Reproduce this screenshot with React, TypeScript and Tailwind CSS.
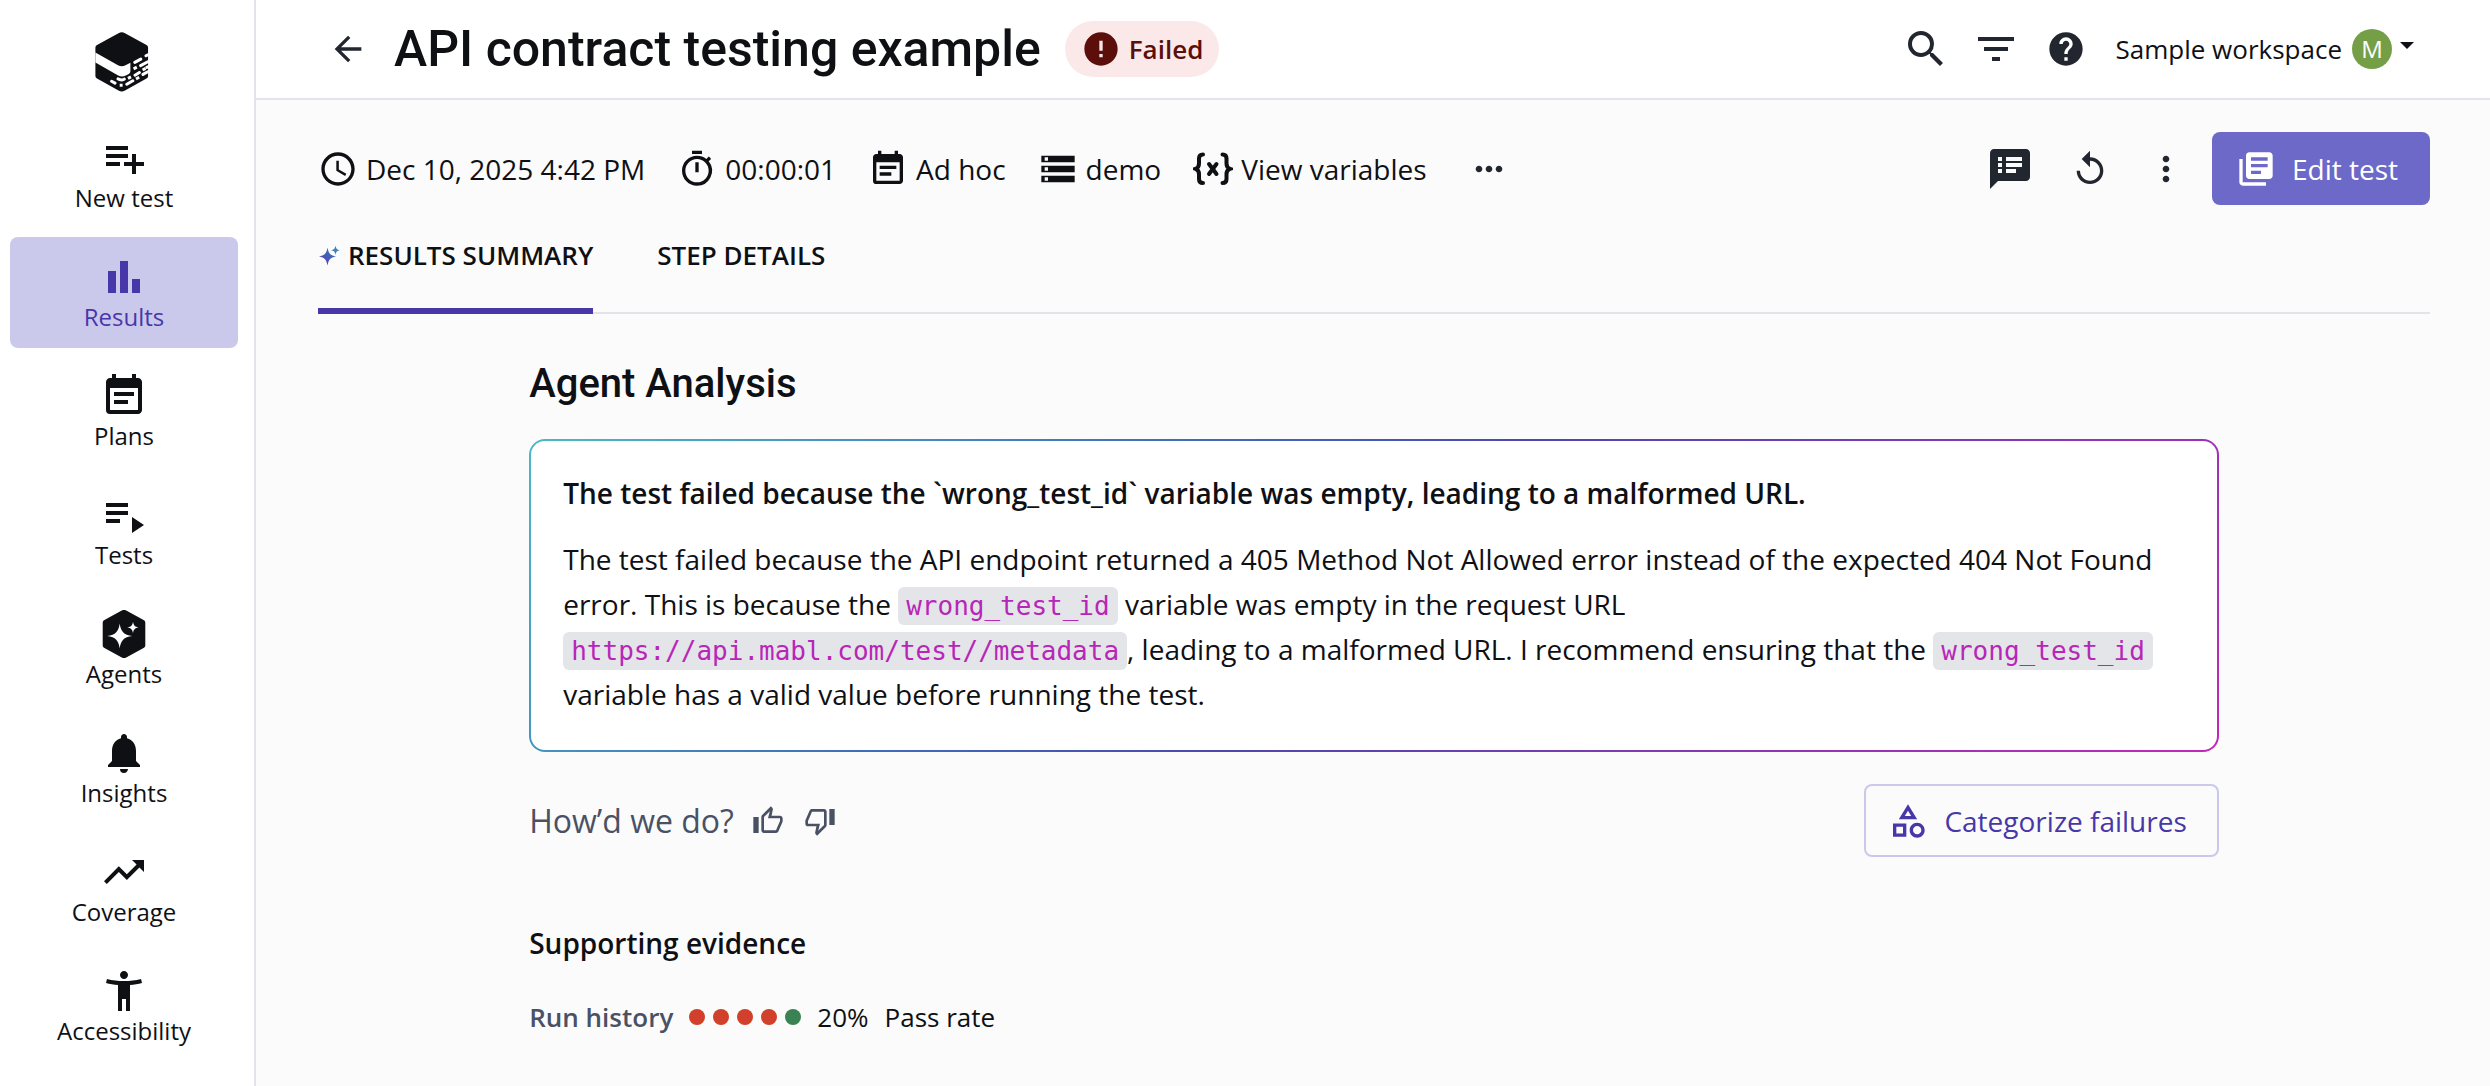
import type { ReactNode } from "react";
import type { IconType } from "react-icons";
import {
  MdAccessibilityNew,
  MdAccessTime,
  MdArrowBack,
  MdBarChart,
  MdError,
  MdEventNote,
  MdFilterList,
  MdHelp,
  MdLibraryBooks,
  MdMoreHoriz,
  MdMoreVert,
  MdNotifications,
  MdOutlineCategory,
  MdOutlineThumbDownOffAlt,
  MdOutlineThumbUpOffAlt,
  MdOutlineTimer,
  MdPlaylistAdd,
  MdPlaylistPlay,
  MdReplay,
  MdSearch,
  MdSpeakerNotes,
  MdStorage,
  MdTrendingUp,
} from "react-icons/md";

function Logo() {
  return (
    <svg viewBox="0 0 54 60" className="h-[60px] w-[54px]" aria-label="mabl">
      <path
        d="M23.5 1.2a6.5 6.5 0 0 1 6.5 0L51.5 13a3 3 0 0 1 1.6 2.6V44a3 3 0 0 1-1.6 2.6L30 58.6a6.5 6.5 0 0 1-6.5 0L2 46.6A3 3 0 0 1 .4 44V15.600A3 3 0 0 1 2 13z"
        fill="#0f1014"
      />
      <path
        d="M.4 20.600 23 33.200c2.600 1.300 5 1.300 7.500 0l4.900-2.400V39c0 1.600-.6 2.400-2 3.200l-2.600 1.300c-2.600 1.300-5 1.300-7.600 0L.4 30.600z"
        fill="#fff"
      />
      <g stroke="#fff" strokeWidth="3" strokeLinecap="round" fill="none">
        <path d="M39.800 30.400l6-3.300M51 23.800l2-1.100M45.600 33.600l7.200-3.900M40 43.200l4.400-2.700M48 42.400l4.800-2.700M31.800 52.200l6-3.400M23 46.800q4.300 2 6.300.4M16.600 49.200l3.400 1.900M51.800 35.400l1-.5" />
        <path strokeLinecap="butt" d="M38.600 36.800l3.200-1.600M47.600 38l3-1.600M33 46.300l3-1.500M41 47l3.200-1.700M24.700 53.300h2.900" />
      </g>
      <path d="M53.600 0v60H58V0z" fill="#fff" />
    </svg>
  );
}

function AgentsIcon({ className }: { className?: string }) {
  return (
    <svg viewBox="0 0 48 48" className={className} aria-hidden="true">
      <path
        d="M21.300.7a5.500 5.500 0 0 1 5.400 0l17.300 9.600a2.500 2.500 0 0 1 1.300 2.200v23a2.500 2.500 0 0 1-1.300 2.200L26.700 47.300a5.500 5.500 0 0 1-5.400 0L4 37.700a2.500 2.500 0 0 1-1.300-2.200v-23A2.500 2.500 0 0 1 4 10.300z"
        fill="currentColor"
      />
      <path d="M19.700 13.500c1 7.800 4 11.500 12.500 12.500-8.500 1-11.500 4.700-12.500 12.500-1-7.800-4-11.500-12.500-12.500 8.500-1 11.500-4.700 12.500-12.500z" fill="#fff" />
      <path d="M33 11.800c.5 3.600 2 5.200 5.700 5.700-3.700.5-5.200 2.100-5.700 5.700-.5-3.600-2-5.200-5.700-5.700 3.700-.5 5.200-2.100 5.700-5.700z" fill="#fff" />
    </svg>
  );
}

function SparkleIcon() {
  return (
    <svg viewBox="0 0 22 22" className="h-[22px] w-[22px]" aria-hidden="true">
      <defs>
        <linearGradient id="sparkle" x1="1" y1="0" x2="0" y2="1">
          <stop offset="0" stopColor="#3a9cc4" />
          <stop offset="0.5" stopColor="#3f62b8" />
          <stop offset="1" stopColor="#6a30b6" />
        </linearGradient>
      </defs>
      <path
        d="M9.500 3.500c1.200 6.200 2.700 7.700 8.500 9-5.800 1.300-7.300 2.800-8.500 9-1.200-6.200-2.700-7.700-8.500-9 5.800-1.300 7.300-2.800 8.500-9zM17.500 1.500c.7 3.400 1.400 4.100 4.500 4.700-3.100.6-3.800 1.300-4.500 4.700-.7-3.400-1.400-4.100-4.500-4.700 3.100-.6 3.800-1.300 4.500-4.700z"
        fill="url(#sparkle)"
      />
    </svg>
  );
}

function VariablesIcon({ className }: { className?: string }) {
  return (
    <svg viewBox="0 0 40 40" className={className} aria-hidden="true" fill="none" stroke="currentColor" strokeWidth="4" strokeLinecap="round">
      <path d="M10 5.500c-3 0-4 1.300-4 4v5c0 3-1 4.500-3.500 5.300 2.500.8 3.500 2.300 3.500 5.300v5c0 2.700 1 4 4 4" />
      <path d="M29.500 5.500c3 0 4 1.300 4 4v5c0 3 1 4.500 3.500 5.300-2.500.8-3.500 2.300-3.500 5.300v5c0 2.700-1 4-4 4" />
      <path d="M16 15l7.500 10M23.500 15 16 25" />
    </svg>
  );
}

type NavItem = { label: string; icon: IconType | typeof AgentsIcon };

const NAV: NavItem[] = [
  { label: "New test", icon: MdPlaylistAdd },
  { label: "Results", icon: MdBarChart },
  { label: "Plans", icon: MdEventNote },
  { label: "Tests", icon: MdPlaylistPlay },
  { label: "Agents", icon: AgentsIcon },
  { label: "Insights", icon: MdNotifications },
  { label: "Coverage", icon: MdTrendingUp },
  { label: "Accessibility", icon: MdAccessibilityNew },
];

function Sidebar({ active }: { active: string }) {
  return (
    <aside className="flex w-64 shrink-0 flex-col border-r-2 border-[#e4e3e9] bg-white pl-2.5 pr-4">
      <a href="#home" className="flex h-[118px] justify-center pr-1 pt-8">
        <Logo />
      </a>
      <nav className="flex flex-col gap-2">
        {NAV.map(({ label, icon: Glyph }) => (
          <a
            key={label}
            href={`#${label.toLowerCase().replace(" ", "-")}`}
            className={
              label === active
                ? "flex h-[111px] flex-col items-center rounded-lg bg-[#cbc9eb] pt-4 text-[#4737a9]"
                : "flex h-[111px] flex-col items-center rounded-lg pt-4"
            }
          >
            <Glyph className="size-12" />
            <span className="text-2xl leading-8">{label}</span>
          </a>
        ))}
      </nav>
    </aside>
  );
}

function Header() {
  return (
    <header className="flex h-[100px] items-center border-b-2 border-[#e4e3e9] bg-white pl-[72px] pr-[76px]">
      <button aria-label="Back" className="text-[#22262f]">
        <MdArrowBack className="size-10" />
      </button>
      <h1 className="ml-[26px] whitespace-nowrap font-['Roboto',sans-serif] text-[50px] font-medium leading-[60px]">
        API contract testing example
      </h1>
      <span className="ml-6 flex h-14 items-center gap-2 rounded-full bg-[#fbe9ea] px-4 text-[26px] font-semibold text-[#5c0f0a]">
        <MdError className="size-10" />
        Failed
      </span>
      <div className="ml-auto flex items-center text-[#22262f]">
        <div className="flex items-center gap-[22px]">
          <button aria-label="Search">
            <MdSearch className="size-12" />
          </button>
          <button aria-label="Filter">
            <MdFilterList className="size-12" />
          </button>
          <button aria-label="Help" className="flex w-12 justify-center">
            <MdHelp className="size-10" />
          </button>
        </div>
        <button className="ml-[26px] flex items-center whitespace-nowrap text-[26px] text-[#0f1014]">
          Sample workspace
          <span className="ml-2.5 flex size-10 items-center justify-center rounded-full bg-[#759f47] text-2xl text-white">M</span>
          <svg viewBox="0 0 14 7" className="mb-2 ml-2 h-[7px] w-3.5" aria-hidden="true">
            <path d="M0 0h14L7 7z" fill="currentColor" />
          </svg>
        </button>
      </div>
    </header>
  );
}

function Meta({ icon, children }: { icon: ReactNode; children: ReactNode }) {
  return (
    <span className="flex items-center gap-2 whitespace-nowrap">
      {icon}
      {children}
    </span>
  );
}

function Toolbar() {
  return (
    <div className="flex h-[73px] items-center">
      <div className="flex items-center gap-8 text-[28px] leading-10">
        <Meta icon={<MdAccessTime className="size-10" />}>Dec 10, 2025 4:42 PM</Meta>
        <Meta icon={<MdOutlineTimer className="size-10" />}>00:00:01</Meta>
        <Meta icon={<MdEventNote className="size-10" />}>Ad hoc</Meta>
        <Meta icon={<MdStorage className="size-10" />}>demo</Meta>
        <button className="flex items-center gap-2 whitespace-nowrap">
          <VariablesIcon className="size-10" />
          View variables
        </button>
        <button aria-label="More details" className="ml-2.5 text-[#22262f]">
          <MdMoreHoriz className="size-10" />
        </button>
      </div>
      <div className="ml-auto flex items-center text-[#22262f]">
        <button aria-label="Notes">
          <MdSpeakerNotes className="size-12" />
        </button>
        <button aria-label="Rerun" className="ml-9">
          <MdReplay className="size-10" />
        </button>
        <button aria-label="More actions" className="ml-9">
          <MdMoreVert className="size-10" />
        </button>
        <button className="ml-[26px] flex h-[73px] items-center gap-4 whitespace-nowrap rounded-lg bg-[#6c69c9] pl-6 pr-8 text-[28px] leading-10 text-white">
          <MdLibraryBooks className="size-10" />
          Edit test
        </button>
      </div>
    </div>
  );
}

function Tabs() {
  return (
    <div role="tablist" className="flex gap-16 border-b-2 border-[#e4e3e9] pt-8 text-[26px] font-semibold leading-9">
      <button
        role="tab"
        aria-selected="true"
        className="-mb-0.5 flex items-center gap-2 border-b-6 border-[#4737a9] pb-[35px]"
      >
        <SparkleIcon />
        RESULTS SUMMARY
      </button>
      <button role="tab" aria-selected="false" className="-mb-0.5 border-b-6 border-transparent pb-[35px]">
        STEP DETAILS
      </button>
    </div>
  );
}

function Code({ children }: { children: ReactNode }) {
  return (
    <code className="rounded-md bg-[#e4e5e9] px-2 py-1 font-['DejaVu_Sans_Mono',monospace] text-[26px] leading-none text-[#b826b8]">
      {children}
    </code>
  );
}

function Analysis() {
  return (
    <section>
      <h2 className="mt-[46px] font-['Roboto',sans-serif] text-[40px] font-medium leading-[48px]">Agent Analysis</h2>
      <div className="mt-[31px] rounded-2xl bg-[linear-gradient(135deg,#4bb9c6_0%,#3f6cb9_33%,#4d47b0_50%,#c228b8_100%)] p-0.5">
        <div className="rounded-[14px] bg-white px-8 pb-[33px] pt-[30px] text-[28px] leading-[45px]">
          <p className="font-semibold">
            The test failed because the `wrong_test_id` variable was empty, leading to a malformed URL.
          </p>
          <p className="mt-[21px]">
            The test failed because the API endpoint returned a 405 Method Not Allowed error instead of the expected
            404 Not Found error. This is because the <Code>wrong_test_id</Code> variable was empty in the request URL{" "}
            <Code>https://api.mabl.com/test//metadata</Code>, leading to a malformed URL. I recommend ensuring that
            the <Code>wrong_test_id</Code> variable has a valid value before running the test.
          </p>
        </div>
      </div>
    </section>
  );
}

function Feedback() {
  return (
    <div className="mt-8 flex items-center justify-between">
      <div className="flex items-center gap-[18px] text-[32px] text-[#4a5164]">
        How’d we do?
        <span className="flex gap-5">
          <button aria-label="Thumbs up">
            <MdOutlineThumbUpOffAlt className="size-8" />
          </button>
          <button aria-label="Thumbs down">
            <MdOutlineThumbDownOffAlt className="size-8" />
          </button>
        </span>
      </div>
      <button className="flex h-[73px] items-center gap-4 rounded-lg border-2 border-[#cbc9eb] pl-[22px] pr-[30px] text-[28px] leading-10 text-[#4737a9]">
        <MdOutlineCategory className="size-10" />
        Categorize failures
      </button>
    </div>
  );
}

const RUNS = [false, false, false, false, true];

function Evidence() {
  return (
    <section>
      <h3 className="mt-[66px] text-[28px] font-semibold leading-10">Supporting evidence</h3>
      <div className="mt-[34px] flex items-center gap-4 text-[26px] leading-10">
        <span className="font-semibold text-[#4a5164]">Run history</span>
        <span className="flex gap-2">
          {RUNS.map((passed, i) => (
            <span key={i} className={passed ? "size-4 rounded-full bg-[#3a8252]" : "size-4 rounded-full bg-[#d0402b]"} />
          ))}
        </span>
        <span>20%</span>
        <span>Pass rate</span>
      </div>
    </section>
  );
}

export default function App() {
  return (
    <div className="flex min-h-screen bg-[#fbfbfb] font-['Open_Sans',sans-serif] text-[#0f1014]">
      <Sidebar active="Results" />
      <div className="flex min-w-0 grow flex-col">
        <Header />
        <main className="pl-[62px] pr-[60px] pt-8">
          <Toolbar />
          <Tabs />
          <div className="mx-auto w-4/5">
            <Analysis />
            <Feedback />
            <Evidence />
          </div>
        </main>
      </div>
    </div>
  );
}
